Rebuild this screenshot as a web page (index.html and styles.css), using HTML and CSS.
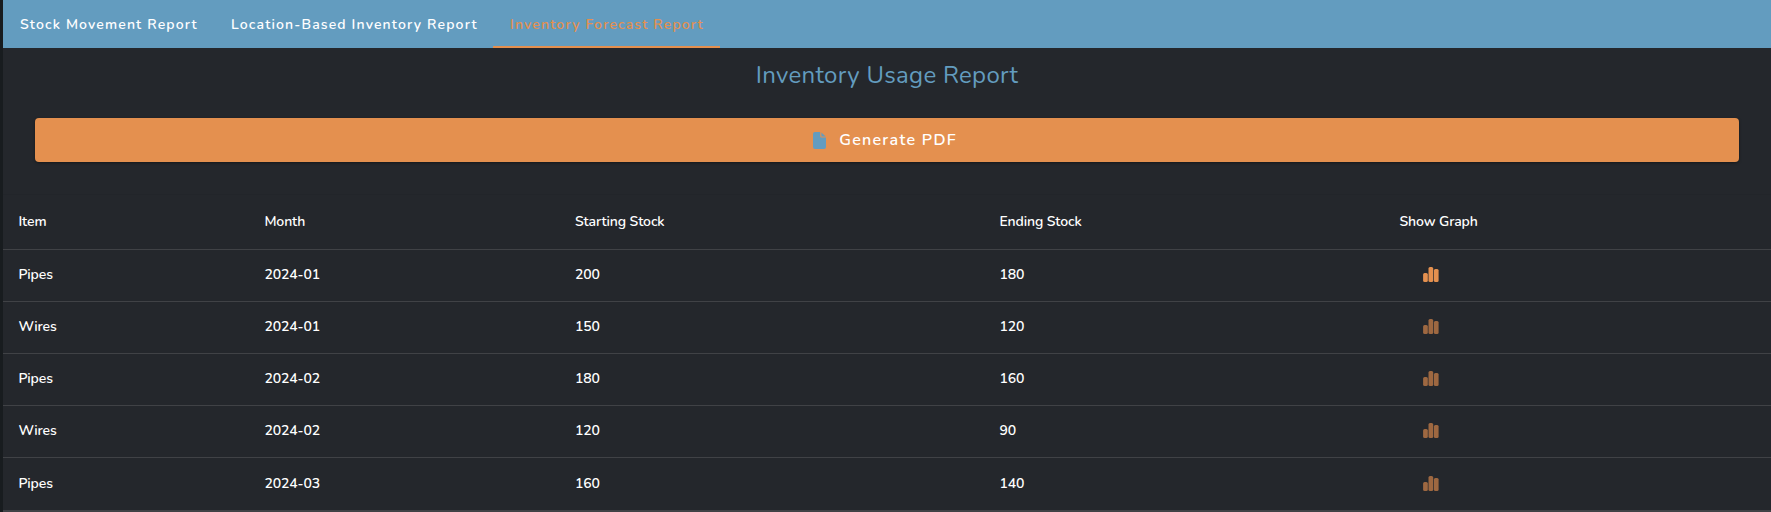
FILE: index.html
```html
<!DOCTYPE html>
<html lang="en">
<head>
<meta charset="utf-8">
<title>Inventory Usage Report</title>
<link rel="stylesheet" href="styles.css">
</head>
<body>
<svg class="defs" aria-hidden="true">
  <symbol id="bars" viewBox="0 0 16 15">
    <rect x="0.1" y="6.1" width="4.7" height="8.9" rx="1.5"/>
    <rect x="5.5" y="0" width="4.7" height="15" rx="1.5"/>
    <rect x="10.9" y="2" width="4.7" height="13" rx="1.5"/>
  </symbol>
</svg>
<main class="page">
  <nav class="tabs">
    <a class="tab tab-movement"><span>Stock Movement Report</span></a>
    <a class="tab tab-location"><span>Location-Based Inventory Report</span></a>
    <a class="tab tab-forecast active"><span>Inventory Forecast Report</span></a>
  </nav>
  <h1 class="title">Inventory Usage Report</h1>
  <button class="generate">
    <svg class="file" viewBox="0 0 13 17"><path d="M2 0H7.2V4.3Q7.2 5.6 8.5 5.6H13V15Q13 17 11 17H2Q0 17 0 15V2Q0 0 2 0Z"/><path d="M8.4 .4L12.7 4.6H9.1Q8.4 4.6 8.4 3.9Z"/></svg>
    <span>Generate PDF</span>
  </button>
  <div class="table">
    <div class="row head"><span>Item</span><span>Month</span><span>Starting Stock</span><span>Ending Stock</span><span>Show Graph</span></div>
    <div class="row"><span>Pipes</span><span>2024-01</span><span>200</span><span>180</span><svg class="graph on"><use href="#bars"/></svg></div>
    <div class="row"><span>Wires</span><span>2024-01</span><span>150</span><span>120</span><svg class="graph"><use href="#bars"/></svg></div>
    <div class="row"><span>Pipes</span><span>2024-02</span><span>180</span><span>160</span><svg class="graph"><use href="#bars"/></svg></div>
    <div class="row"><span>Wires</span><span>2024-02</span><span>120</span><span>90</span><svg class="graph"><use href="#bars"/></svg></div>
    <div class="row last"><span>Pipes</span><span>2024-03</span><span>160</span><span>140</span><svg class="graph"><use href="#bars"/></svg></div>
  </div>
</main>
</body>
</html>
```
FILE: styles.css
```css
* { box-sizing: border-box; }
body {
  margin: 0;
  height: 512px;
  overflow: hidden;
  background: #181c1f;
  color: #f4f5f8;
  font-family: Nunito, Lato, sans-serif;
}
.defs { display: none; }
.page {
  margin-left: 3px;
  height: 512px;
  background: #24272c;
  display: flex;
  flex-direction: column;
}
.tabs {
  display: flex;
  height: 48px;
  flex: none;
  background: #639cbf;
}
.tab {
  display: flex;
  align-items: center;
  padding: 1px 0 0 17px;
  color: #fff;
  font-size: 14px;
  font-weight: 600;
  letter-spacing: 1.14px;
  white-space: nowrap;
}
.tab-movement { width: 211px; }
.tab-location { width: 279px; }
.tab-forecast { width: 227px; }
.tab.active {
  color: #e4904f;
  box-shadow: inset 0 -2px #e4904f;
}
.title {
  margin: 10px 0 0;
  height: 34px;
  line-height: 34px;
  font-size: 24px;
  font-weight: 400;
  letter-spacing: 0.3px;
  text-align: center;
  color: #639cbf;
}
.generate {
  display: flex;
  align-items: center;
  justify-content: center;
  gap: 13px;
  height: 44px;
  margin: 26px 32px 32px;
  padding: 0 4px 0 0;
  flex: none;
  border: 0;
  border-radius: 4px;
  background: #e4904f;
  box-shadow: 0 1px 3px rgba(0, 0, 0, 0.4);
  color: #fff;
  font: 600 16px/44px Nunito, Lato, sans-serif;
  letter-spacing: 1.28px;
}
.file { width: 13px; height: 17px; fill: #639cbf; }
.table {
  border-top: 1px solid #22252a;
  color: #fff;
  font-size: 14px;
  font-weight: 600;
  letter-spacing: -0.1px;
}
.row {
  display: grid;
  grid-template-columns: 246px 310.5px 424.5px 400px 1fr;
  align-items: center;
  height: 52px;
  padding: 0 0 2px 15.4px;
  border-bottom: 1px solid #404246;
}
.row.head { height: 55px; }
.row.last {
  height: 54px;
  border-bottom-width: 2px;
}
.graph {
  width: 16px;
  height: 15px;
  margin-left: 24px;
  fill: #9e6841;
}
.graph.on { fill: #e4904f; }
```
